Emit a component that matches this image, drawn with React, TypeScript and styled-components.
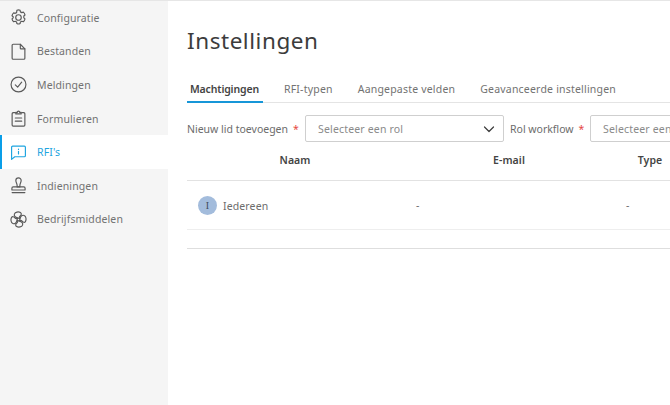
import React from "react";
import styled, { createGlobalStyle } from "styled-components";

const Global = createGlobalStyle`
  html, body { margin: 0; padding: 0; width: 670px; height: 405px; overflow: hidden; background: #fff; }
  body { font-family: "Noto Sans", "Liberation Sans", sans-serif; }
`;

const Page = styled.div`
  display: flex;
  width: 670px;
  height: 405px;
  overflow: hidden;
  border-top: 1px solid #e6e6e6;
  box-sizing: border-box;
`;
const Side = styled.nav`
  flex: 0 0 168px;
  background: #f5f5f5;
  display: flex;
  flex-direction: column;
`;
const NavItem = styled.div<{ $active?: boolean }>`
  height: 33.6px;
  display: flex;
  align-items: center;
  gap: 10px;
  padding-left: 8px;
  box-sizing: border-box;
  font-size: 10.5px;
  letter-spacing: 0.12px;
  color: ${(p) => (p.$active ? "#1fa5e0" : "#727272")};
  background: ${(p) => (p.$active ? "#fff" : "transparent")};
  border-left: 2px solid ${(p) => (p.$active ? "#0a9ee8" : "transparent")};
  svg { flex: 0 0 17px; width: 17px; height: 17px; }
`;
const Main = styled.main`
  flex: 0 0 auto;
  width: 502px;
  padding-left: 19px;
  box-sizing: border-box;
  overflow: hidden;
`;
const Title = styled.h1`
  margin: 0;
  padding-top: 24px;
  height: 74px;
  box-sizing: border-box;
  font-size: 22.5px;
  line-height: 32px;
  font-weight: 400;
  letter-spacing: 0.55px;
  color: #3c3c3c;
`;
const Tabs = styled.div`
  display: flex;
  gap: 25px;
  height: 27px;
  width: 483px;
  border-bottom: 1px solid #e4e4e4;
`;
const Tab = styled.div<{ $active?: boolean }>`
  height: 28px;
  box-sizing: border-box;
  padding: 1px ${(p) => (p.$active ? "4px 0 3px" : "0 0")};
  margin-right: ${(p) => (p.$active ? "-4px" : "0")};
  line-height: 27px;
  font-size: 10.5px;
  letter-spacing: ${(p) => (p.$active ? "-0.15px" : "0.2px")};
  font-weight: ${(p) => (p.$active ? 600 : 400)};
  color: ${(p) => (p.$active ? "#444" : "#727272")};
  border-bottom: 2px solid ${(p) => (p.$active ? "#1696d8" : "transparent")};
`;
const FormRow = styled.div`
  display: flex;
  align-items: center;
  margin-top: 12px;
  height: 27px;
  width: 600px;
`;
const Label = styled.label<{ $w: number }>`
  flex: 0 0 ${(p) => p.$w}px;
  font-size: 10.5px;
  letter-spacing: 0;
  color: #6c6c6c;
  white-space: nowrap;
`;
const Req = styled.span`
  color: #e5473f;
  margin-left: 5px;
`;
const Select = styled.div<{ $w: number }>`
  flex: 0 0 ${(p) => p.$w}px;
  height: 27px;
  margin-right: 6px;
  box-sizing: border-box;
  border: 1px solid #cfcfcf;
  border-radius: 2px;
  display: flex;
  align-items: center;
  justify-content: space-between;
  padding: 0 7px 0 12px;
  font-size: 10.5px;
  letter-spacing: 0.17px;
  color: #8a8a8a;
  white-space: nowrap;
  svg { width: 14px; height: 14px; flex: none; }
`;
const TableHead = styled.div`
  display: grid;
  grid-template-columns: 216px 212px 70px;
  width: 483px;
  height: 38px;
  border-bottom: 1px solid #e2e2e2;
  font-size: 10.5px;
  letter-spacing: 0.1px;
  font-weight: 600;
  color: #444;
  line-height: 37px;
  text-align: center;
`;
const TableRow = styled.div`
  display: grid;
  grid-template-columns: 190px 80px 1fr;
  width: 483px;
  height: 48px;
  box-sizing: content-box;
  border-bottom: 1px solid #eeeeee;
  align-items: center;
  font-size: 10.5px;
  letter-spacing: 0.12px;
  color: #6c6c6c;
`;
const NameCell = styled.div`
  display: flex;
  align-items: center;
  gap: 6px;
  padding: 1px 0 0 11px;
`;
const Avatar = styled.div`
  width: 19px;
  height: 19px;
  border-radius: 50%;
  background: #a3bcdc;
  color: #3f4a5a;
  font-family: "Liberation Serif", serif;
  font-size: 10px;
  line-height: 19px;
  text-align: center;
`;
const DashCell = styled.div<{ $ml: number }>`
  margin-left: ${(p) => p.$ml}px;
`;
const Foot = styled.div`
  width: 483px;
  height: 18px;
  border-bottom: 1px solid #dedede;
`;

const S = { fill: "none", stroke: "#5a5a5a", strokeWidth: 1.1, strokeLinecap: "round", strokeLinejoin: "round" } as const;
const Gear = () => (
  <svg viewBox="0 0 16 16" {...S}>
    <circle cx="8" cy="8" r="2.600" />
    <path d="M6.500 1.200c.9-.5 2.100-.5 3 0l.3 1.500 1.300.7 1.500-.5c.8.700 1.300 1.700 1.500 2.700l-1.100 1v1.700l1.100 1c-.2 1-.7 2-1.500 2.700l-1.500-.5-1.300.7-.3 1.500c-.9.500-2.100.5-3 0l-.3-1.500-1.300-.7-1.500.5c-.8-.7-1.300-1.700-1.500-2.700l1.100-1V7.300l-1.100-1c.2-1 .7-2 1.500-2.700l1.500.5 1.300-.7z" />
  </svg>
);
const FileIc = () => (
  <svg viewBox="0 0 16 16" {...S}>
    <path d="M2 2.200a1 1 0 0 1 1-1h6.700L14 5.500v8.800a1 1 0 0 1-1 1H3a1 1 0 0 1-1-1z" />
    <path d="M9.700 1.200v3.700a.6.6 0 0 0 .6.6H14" />
  </svg>
);
const CheckIc = () => (
  <svg viewBox="0 0 16 16" {...S}>
    <circle cx="8" cy="8" r="7" />
    <path d="M5 8.300l2.200 2.100L11 5.800" />
  </svg>
);
const FormIc = () => (
  <svg viewBox="0 0 16 16" {...S}>
    <path d="M5 2.500H3a1 1 0 0 0-1 1v10.700a1 1 0 0 0 1 1h10a1 1 0 0 0 1-1V3.500a1 1 0 0 0-1-1h-2" />
    <path d="M5.500 3.700V2.200h1.400a1.100 1.100 0 0 1 2.200 0h1.400v1.500z" />
    <path d="M5 7.500h6M5 10.500h6" />
  </svg>
);
const RfiIc = () => (
  <svg viewBox="0 0 16 16" {...S} stroke="#1fa5e0">
    <path d="M1.500 14.500V3a1 1 0 0 1 1-1h11a1 1 0 0 1 1 1v8a1 1 0 0 1-1 1H4.500z" />
    <path d="M8 6.800v2.600M8 4.800v.3" />
  </svg>
);
const StampIc = () => (
  <svg viewBox="0 0 16 16" {...S}>
    <path d="M5.500 3.300a2.500 2.500 0 1 1 5 0c0 2-1.200 2.800-1.200 4.700v1.300H6.700V8c0-1.900-1.200-2.700-1.200-4.700z" />
    <path d="M1.800 12.200v-1.700a1.200 1.200 0 0 1 1.200-1.200h10a1.200 1.200 0 0 1 1.200 1.200v1.700z" />
    <path d="M2 14.700h12" />
  </svg>
);
const BLADE = "M7.200 6.500C4.800 6 3.500 4.600 4.200 2.700 4.900.9 8 .4 9.800 1.400c1.200.7 1 2.300 0 3-.7.500-1 1-1 1.800";
const FanIc = () => (
  <svg viewBox="0 0 16 16" {...S}>
    <circle cx="8" cy="8" r="1.300" />
    {[0, 90, 180, 270].map((a) => (
      <path key={a} d={BLADE} transform={`rotate(${a} 8 8)`} />
    ))}
  </svg>
);
const Chevron = () => (
  <svg viewBox="0 0 14 14" fill="none" stroke="#3c3c3c" strokeWidth="1.200" strokeLinecap="round" strokeLinejoin="round">
    <path d="M2.500 5l4.500 4.500L11.500 5" />
  </svg>
);

const nav: [string, React.ReactNode, boolean?][] = [
  ["Configuratie", <Gear />],
  ["Bestanden", <FileIc />],
  ["Meldingen", <CheckIc />],
  ["Formulieren", <FormIc />],
  ["RFI's", <RfiIc />, true],
  ["Indieningen", <StampIc />],
  ["Bedrijfsmiddelen", <FanIc />],
];

export default function App() {
  return (
    <Page>
      <Global />
      <Side>
        {nav.map(([label, icon, active]) => (
          <NavItem key={label} $active={active}>
            {icon}
            {label}
          </NavItem>
        ))}
      </Side>
      <Main>
        <Title>Instellingen</Title>
        <Tabs>
          <Tab $active>Machtigingen</Tab>
          <Tab>RFI-typen</Tab>
          <Tab>Aangepaste velden</Tab>
          <Tab>Geavanceerde instellingen</Tab>
        </Tabs>
        <FormRow>
          <Label $w={118}>
            Nieuw lid toevoegen<Req>*</Req>
          </Label>
          <Select $w={199}>
            Selecteer een rol
            <Chevron />
          </Select>
          <Label $w={80}>
            Rol workflow<Req>*</Req>
          </Label>
          <Select $w={199}>Selecteer een rol</Select>
        </FormRow>
        <TableHead>
          <div>Naam</div>
          <div>E-mail</div>
          <div>Type</div>
        </TableHead>
        <TableRow>
          <NameCell>
            <Avatar>I</Avatar>
            Iedereen
          </NameCell>
          <DashCell $ml={39}>-</DashCell>
          <DashCell $ml={169}>-</DashCell>
        </TableRow>
        <Foot />
      </Main>
    </Page>
  );
}
